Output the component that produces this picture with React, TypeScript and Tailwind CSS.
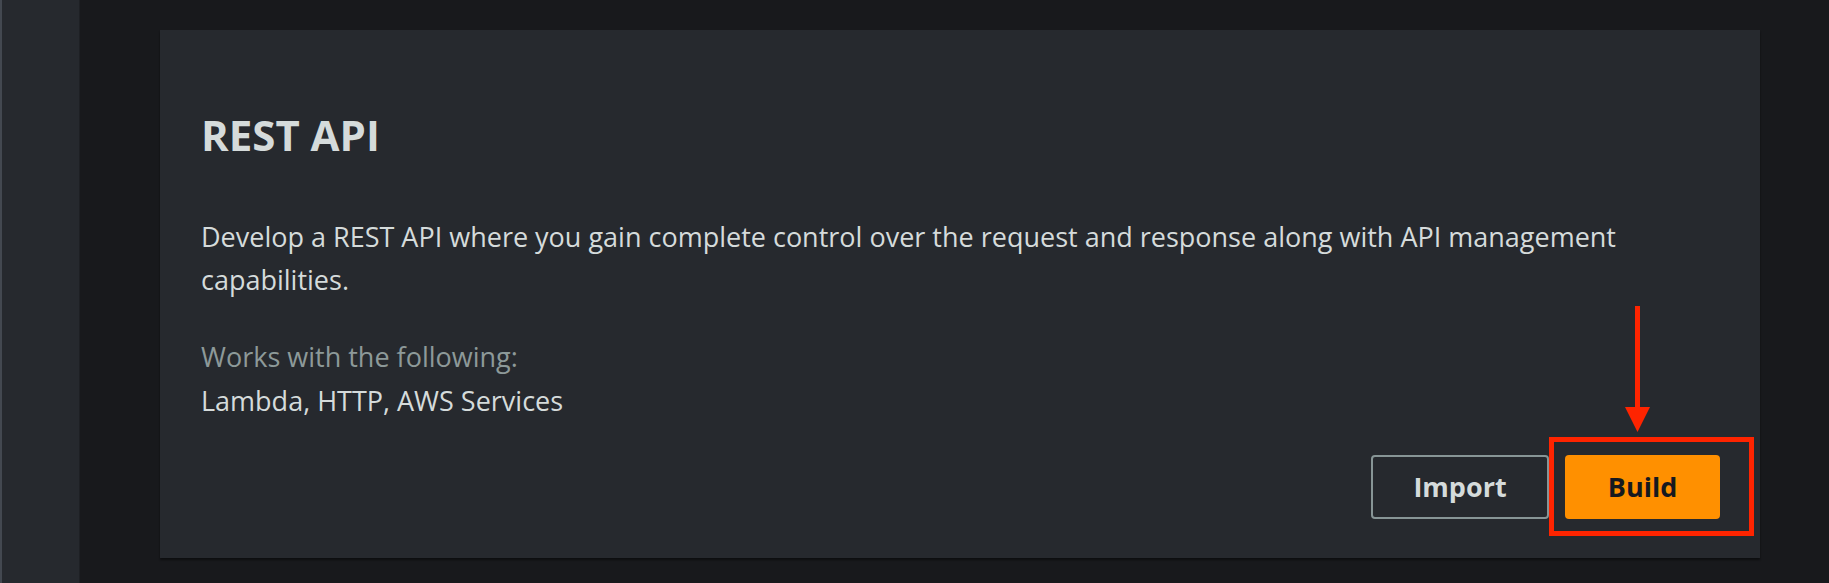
export default function App() {
  return (
    <div
      className="flex h-[583px] w-full overflow-hidden bg-[#18191c]"
      style={{ fontFamily: '"Open Sans", "Noto Sans", sans-serif' }}
    >
      {/* Side nav stub */}
      <div className="w-[2px] shrink-0 bg-[#434850]" />
      <div className="w-[78px] shrink-0 border-r border-[#1e2024] bg-[#26292e]" />

      {/* Main area */}
      <main className="flex-1 pl-[80px] pr-[69px] pt-[30px]">
        <section className="flex h-[528px] flex-col bg-[#26292e] pb-[39px] pl-[41px] pr-[40px] pt-[80px] shadow-[0_2px_2px_rgba(0,0,0,0.45)]">
          <h1 className="text-[42px] font-bold leading-[50px] text-[#d5dbdb]">REST API</h1>

          <p className="mt-[55px] text-[27px] leading-[43px] text-[#d5dbdb]">
            Develop a REST API where you gain complete control over the request and response along with API
            management capabilities.
          </p>

          <div className="mt-[34px] text-[27px] leading-[44px]">
            <div className="text-[#8d9999]">Works with the following:</div>
            <div className="text-[#d5dbdb]">Lambda, HTTP, AWS Services</div>
          </div>

          <div className="mt-auto flex justify-end gap-[16px]">
            <button className="h-[64px] w-[178px] rounded-[4px] border-2 border-[#879596] text-[27px] font-bold text-[#d5dbdb]">
              Import
            </button>
            <div className="relative">
              <button className="h-[64px] w-[155px] rounded-[4px] bg-[#ff9000] text-[27px] font-bold text-[#16191f]">
                Build
              </button>
              {/* annotation box */}
              <div className="pointer-events-none absolute -bottom-[17px] -left-[16px] -right-[34px] -top-[18px] border-[5px] border-[#fe2400]" />
              {/* annotation arrow */}
              <svg
                className="pointer-events-none absolute left-[60px] top-[-149px]"
                width="25"
                height="127"
                viewBox="0 0 25 127"
              >
                <line x1="12.5" y1="0" x2="12.5" y2="104" stroke="#fe2400" strokeWidth="5" />
                <polygon points="0,101 25,101 12.5,126" fill="#fe2400" />
              </svg>
            </div>
          </div>
        </section>
      </main>
    </div>
  );
}
